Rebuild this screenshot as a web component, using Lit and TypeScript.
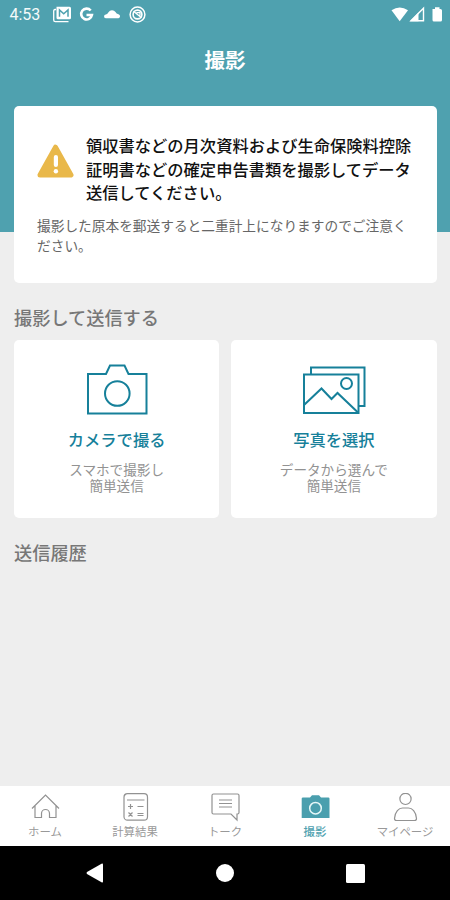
import { LitElement, html, css, svg } from "lit";
import { customElement } from "lit/decorators.js";
import { classMap } from "lit/directives/class-map.js";

const tabs = [
  {
    label: "ホーム",
    icon: svg`<path d="M2 15.5 15.5 2 29 15.5M5 13V24.5H11.500V20.500A4 4 0 0 1 19.500 20.500V24.500H26V13" />`,
  },
  {
    label: "計算結果",
    icon: svg`<rect x="4" y="0.700" width="23.500" height="26.500" rx="3.500" />
      <path d="M7 7H24.500M8 13.500H13M10.500 11V16M17.500 13.500H23.500M8.500 19.500L12.500 23.500M12.500 19.500L8.500 23.500M17.500 20.500H23.500M17.500 22.500H23.500" />`,
  },
  {
    label: "トーク",
    icon: svg`<path d="M3.500 1H27.500Q29 1 29 2.500V19.500Q29 21 27.500 21H27V27L21 21H3.500Q2 21 2 19.500V2.500Q2 1 3.500 1Z" />
      <path d="M9 7H22M9 10.500H22M9 14H22" />`,
  },
  {
    label: "撮影",
    active: true,
    icon: svg`<path class="solid" d="M3 4.500H10L12 2.300H19L21 4.500H28.300Q29.500 4.500 29.500 5.500V25H1.700V5.500Q1.700 4.500 3 4.500Z" />
      <circle class="lens" cx="15.500" cy="15.200" r="5.800" />`,
  },
  {
    label: "マイページ",
    icon: svg`<circle cx="15.500" cy="5.900" r="5.600" />
      <path d="M6.500 27.500Q4.500 27.500 4.500 25.500C5 18.500 9 15 12.500 15H18.500C22 15 26 18.500 26.500 25.500Q26.500 27.500 24.500 27.500Z" />`,
  },
];

@customElement("app-root")
export class AppRoot extends LitElement {
  static styles = css`
    :host {
      display: flex;
      flex-direction: column;
      height: 900px;
      box-sizing: border-box;
      background: #eeeeee;
      font-family: "Noto Sans CJK JP", sans-serif;
      overflow: hidden;
    }
    * {
      box-sizing: border-box;
    }
    svg {
      display: block;
      flex: none;
    }
    p,
    h1,
    h2,
    h3 {
      margin: 0;
    }
    .top {
      flex: none;
      height: 232px;
      background: #4fa1af;
      color: #fff;
    }
    .status {
      display: flex;
      height: 30px;
      align-items: center;
      padding: 0 7px 0 9.500px;
      justify-content: space-between;
    }
    .clock {
      font: 16px/30px Roboto, sans-serif;
      width: 42.500px;
      color: #f4fafa;
    }
    .left {
      display: flex;
      align-items: center;
    }
    .title {
      font-size: 20.500px;
      line-height: 30px;
      font-weight: 700;
      text-align: center;
      padding-top: 14px;
    }
    .main {
      flex: 1;
      margin-top: -126px;
      padding: 0 13.500px 0 14px;
    }
    .card {
      background: #fff;
      border-radius: 5px;
    }
    .notice {
      height: 177px;
      padding: 28px 23px 0;
      white-space: nowrap;
    }
    .lead {
      display: flex;
      gap: 12px;
      align-items: flex-start;
    }
    .lead svg {
      margin-top: 9.500px;
    }
    .lead p {
      font-size: 16.270px;
      line-height: 23.500px;
      color: #111;
      font-weight: 500;
    }
    .note {
      font-size: 13.700px;
      line-height: 19.700px;
      color: #666;
      margin-top: 11.500px;
    }
    .section {
      font-size: 18.200px;
      line-height: 28px;
      color: #777;
      font-weight: 500;
      margin-top: 20px;
    }
    .choices {
      display: grid;
      grid-template-columns: 1fr 1fr;
      gap: 12px;
      margin-top: 8.500px;
      margin-bottom: 20.500px;
    }
    .choice {
      height: 178px;
      display: flex;
      flex-direction: column;
      align-items: center;
      padding-top: 22px;
      text-align: center;
    }
    .choice svg {
      fill: none;
      stroke: #16809a;
      stroke-width: 2;
    }
    .choice h3 {
      font-size: 16.300px;
      line-height: 24px;
      font-weight: 500;
      color: #16809a;
      margin-top: 11.500px;
    }
    .choice p {
      font-size: 13.600px;
      line-height: 16.700px;
      color: #929292;
      margin-top: 9.500px;
    }
    .tabs {
      flex: none;
      height: 60px;
      display: grid;
      grid-template-columns: repeat(5, 1fr);
      background: #fff;
    }
    .tab {
      display: flex;
      flex-direction: column;
      align-items: center;
      padding-top: 7px;
      font-size: 11.400px;
      line-height: 16px;
      color: #999;
      gap: 1px;
      white-space: nowrap;
    }
    .tab svg {
      fill: none;
      stroke: #929292;
      stroke-width: 1.200;
    }
    .tab.active {
      color: #4fa1af;
      font-weight: 500;
    }
    .tab .solid {
      fill: #4a9fae;
      stroke: none;
    }
    .tab .lens {
      stroke: #e6f7f8;
      stroke-width: 1.500;
    }
    .system {
      flex: none;
      height: 54px;
      background: #000;
      display: flex;
      justify-content: space-between;
      align-items: center;
      padding: 0 85.500px 0 86px;
    }
    .system svg {
      fill: #fff;
    }
  `;

  private renderStatus() {
    return html`
      <div class="status">
        <div class="left">
          <span class="clock">4:53</span>
          <svg width="96" height="18" viewBox="0 0 96 18">
            <path d="M4.500 0.800H17.500Q19 0.800 19 2.300V11.700Q19 13.200 17.500 13.200H6Q4.500 13.200 4.500 11.700Z" fill="#fff" />
            <path d="M7.500 10.800V4L11.700 7.800L16 4V10.800" fill="none" stroke="#4fa1af" stroke-width="1.500" />
            <path d="M4 3.500H3Q1.700 3.500 1.700 5V14Q1.700 15.700 3.300 15.700H16.500" fill="none" stroke="#fff" stroke-width="1.300" />
            <path d="M38.700 4.500A5.400 5.400 0 1 0 39.900 9H34.500" fill="none" stroke="#fff" stroke-width="2.600" />
            <path d="M53.800 12.200A1.800 1.800 0 0 1 54 8.500Q55.500 8 56.500 6.300A4.300 4.300 0 0 1 63.500 6Q64.300 8 66.500 8.300A2 2 0 0 1 66.500 12.200Z" fill="#fff" />
            <g fill="none" stroke="#fff">
              <circle cx="85.500" cy="8.500" r="7.400" stroke-width="1.500" />
              <circle cx="85.500" cy="8.500" r="4.400" stroke-width="1.600" />
              <path d="M81.500 5.200L89.500 11.700M84.500 6.700H88V9.700" stroke-width="1.300" />
            </g>
          </svg>
        </div>
        <svg width="52" height="18" viewBox="0 0 52 18" fill="#fff">
          <path d="M0.500 4.300Q8.700 -1.500 17 4.300L8.700 15.300Z" />
          <path d="M20 14.700L32.500 2.300V14.700Z" fill="none" stroke="#fff" stroke-width="1.400" />
          <path d="M19 15.300L27.500 6.500V15.300Z" />
          <path d="M41.500 3H44V1.200H48.500V3H49.500Q51 3 51 4.500V14Q51 15.500 49.500 15.500H43Q41.500 15.500 41.500 14Z" />
        </svg>
      </div>
    `;
  }

  render() {
    return html`
      <header class="top">
        ${this.renderStatus()}
        <h1 class="title">撮影</h1>
      </header>
      <main class="main">
        <section class="card notice">
          <div class="lead">
            <svg width="37" height="35" viewBox="0 0 37 35">
              <path
                d="M18.500 3.200L34 31H3Z"
                fill="#e9b84a"
                stroke="#e9b84a"
                stroke-width="5"
                stroke-linejoin="round"
              />
              <path d="M18.900 13V21" stroke="#fff" stroke-width="4.200" stroke-linecap="round" />
              <circle cx="18.900" cy="27.300" r="2.200" fill="#fff" />
            </svg>
            <p>
              領収書などの月次資料および生命保険料控除<br />証明書などの確定申告書類を撮影してデータ<br />送信してください。
            </p>
          </div>
          <p class="note">
            撮影した原本を郵送すると二重計上になりますのでご注意く<br />ださい。
          </p>
        </section>
        <h2 class="section">撮影して送信する</h2>
        <div class="choices">
          <div class="card choice">
            <svg width="62" height="54" viewBox="0 0 62 54">
              <path d="M2 12H20L24 3.500H38.500L42.500 12H60.500V51.500H2Z" />
              <circle cx="31.300" cy="31.500" r="12.300" />
            </svg>
            <h3>カメラで撮る</h3>
            <p>スマホで撮影し<br />簡単送信</p>
          </div>
          <div class="card choice">
            <svg width="64" height="54" viewBox="0 0 64 54">
              <path d="M2 12.500H56.500V51H2Z" />
              <path d="M9 12V5.500H62.500V44H57" />
              <path d="M2 43L19.500 26.500L29.500 37L35.500 31L56 50.500" />
              <circle cx="44.500" cy="21.500" r="5.500" />
            </svg>
            <h3>写真を選択</h3>
            <p>データから選んで<br />簡単送信</p>
          </div>
        </div>
        <h2 class="section">送信履歴</h2>
      </main>
      <nav class="tabs">
        ${tabs.map(
          (tab) => html`
            <div class=${classMap({ tab: true, active: !!tab.active })}>
              <svg width="31" height="29" viewBox="0 0 31 29">${tab.icon}</svg>
              <span>${tab.label}</span>
            </div>
          `
        )}
      </nav>
      <footer class="system">
        <svg width="18" height="20" viewBox="0 0 18 20">
          <path d="M1 9L15.500 0.700Q17 0 17 1.500V18.500Q17 20 15.500 19.300L1 11Q0 10 1 9Z" />
        </svg>
        <svg width="18" height="18" viewBox="0 0 18 18"><circle cx="9" cy="9" r="9" /></svg>
        <svg width="19" height="19" viewBox="0 0 19 19"><rect width="19" height="19" rx="1.500" /></svg>
      </footer>
    `;
  }
}
